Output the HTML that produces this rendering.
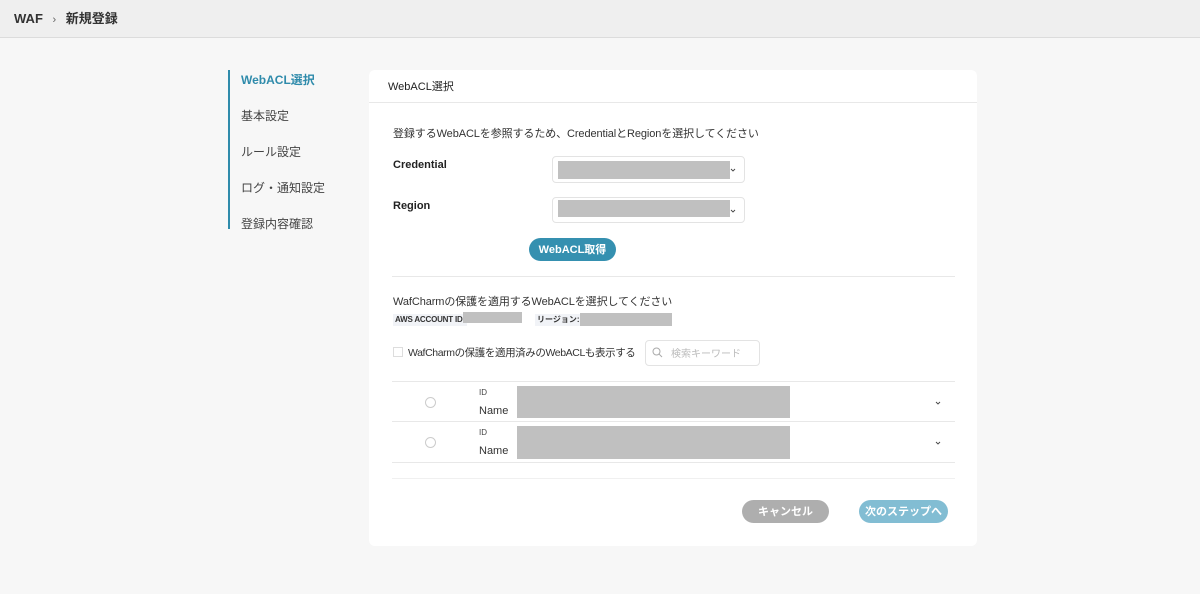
<!DOCTYPE html>
<html><head><meta charset="utf-8"><style>
*{box-sizing:border-box;margin:0;padding:0}
body{width:1200px;height:594px;background:#f7f7f7;font-family:"Liberation Sans","Noto Sans CJK JP",sans-serif;color:#333;position:relative;overflow:hidden;line-height:1.2}
.a{position:absolute;white-space:nowrap}
.hdr{left:0;top:0;width:1200px;height:38px;background:#efefef;border-bottom:1px solid #dcdcdc}
.nav{left:228px;top:70px;width:2px;height:159px;background:#2f8bab}
.nl{left:241px;font-size:12px;color:#444}
.card{left:369px;top:70px;width:608px;height:476px;background:#fff;border-radius:6px}
.gray{background:#c0c0c0}
.sel{border:1px solid #e3e3e3;border-radius:4px;background:#fff}
.btn{border-radius:14px;color:#fff;font-size:11px;font-weight:bold;display:flex;align-items:center;justify-content:center;padding-top:3px}
.hr{height:1px;background:#e8e8e8}
.radio{width:11px;height:11px;border:1px solid #ccc;border-radius:50%}
</style></head><body>
<div class="a hdr"></div>
<div class="a" style="left:14px;top:11px;font-size:13px;font-weight:bold;color:#333">WAF <span style="font-weight:normal;font-size:11px;margin:0 6px;color:#666">›</span> 新規登録</div>
<div class="a nav"></div>
<div class="a nl" style="top:73px;color:#2f8bab;font-weight:bold">WebACL選択</div>
<div class="a nl" style="top:109px">基本設定</div>
<div class="a nl" style="top:145px">ルール設定</div>
<div class="a nl" style="top:181px">ログ・通知設定</div>
<div class="a nl" style="top:217px">登録内容確認</div>
<div class="a card"></div>
<div class="a" style="left:388px;top:81px;font-size:11px;color:#222">WebACL選択</div>
<div class="a hr" style="left:369px;top:102px;width:608px"></div>
<div class="a" style="left:393px;top:128px;font-size:11px;color:#333;letter-spacing:-0.1px">登録するWebACLを参照するため、CredentialとRegionを選択してください</div>
<div class="a" style="left:393px;top:159px;font-size:11px;font-weight:bold;color:#222">Credential</div>
<div class="a" style="left:393px;top:200px;font-size:11px;font-weight:bold;color:#222">Region</div>
<div class="a sel" style="left:552px;top:156px;width:193px;height:27px"></div>
<div class="a gray" style="left:558px;top:161px;width:172px;height:18px"></div>
<svg class="a" style="left:730px;top:168px" width="6" height="4" viewBox="0 0 6 4"><path d="M1 1l2 2 2-2" stroke="#444" fill="none" stroke-width="0.9"/></svg>
<div class="a sel" style="left:552px;top:197px;width:193px;height:26px"></div>
<div class="a gray" style="left:558px;top:200px;width:172px;height:17px"></div>
<svg class="a" style="left:730px;top:209px" width="6" height="4" viewBox="0 0 6 4"><path d="M1 1l2 2 2-2" stroke="#444" fill="none" stroke-width="0.9"/></svg>
<div class="a btn" style="left:529px;top:238px;width:87px;height:23px;background:#3590b0">WebACL取得</div>
<div class="a hr" style="left:392px;top:276px;width:563px"></div>
<div class="a" style="left:393px;top:296px;font-size:11px;color:#333;letter-spacing:-0.1px">WafCharmの保護を適用するWebACLを選択してください</div>
<div class="a" style="left:393px;top:314px;font-size:8px;font-weight:bold;background:#f1f3f7;padding:1px 2px;color:#333;letter-spacing:-0.2px">AWS ACCOUNT ID:</div>
<div class="a gray" style="left:463px;top:312px;width:59px;height:11px"></div>
<div class="a" style="left:535px;top:314px;font-size:8px;font-weight:bold;background:#f1f3f7;padding:1px 2px;color:#333">リージョン:</div>
<div class="a gray" style="left:580px;top:313px;width:92px;height:13px"></div>
<div class="a" style="left:393px;top:347px;width:10px;height:10px;border:1px solid #ddd"></div>
<div class="a" style="left:408px;top:347px;font-size:10.5px;color:#333;letter-spacing:-0.4px">WafCharmの保護を適用済みのWebACLも表示する</div>
<div class="a sel" style="left:645px;top:340px;width:115px;height:26px"></div>
<svg class="a" style="left:652px;top:347px" width="11" height="11" viewBox="0 0 11 11"><circle cx="4.5" cy="4.5" r="3.5" stroke="#aaa" fill="none"/><path d="M7 7l3 3" stroke="#aaa"/></svg>
<div class="a" style="left:671px;top:349px;font-size:10px;color:#bbb">検索キーワード</div>
<div class="a hr" style="left:392px;top:381px;width:563px"></div>
<div class="a radio" style="left:425px;top:397px"></div>
<div class="a" style="left:479px;top:388px;font-size:8px;color:#444">ID</div>
<div class="a" style="left:479px;top:405px;font-size:11px;color:#333">Name</div>
<div class="a gray" style="left:517px;top:386px;width:273px;height:32px"></div>
<svg class="a" style="left:935px;top:401px" width="6" height="4" viewBox="0 0 6 4"><path d="M1 1l2 2 2-2" stroke="#444" fill="none" stroke-width="0.9"/></svg>
<div class="a hr" style="left:392px;top:421px;width:563px"></div>
<div class="a radio" style="left:425px;top:437px"></div>
<div class="a" style="left:479px;top:428px;font-size:8px;color:#444">ID</div>
<div class="a" style="left:479px;top:445px;font-size:11px;color:#333">Name</div>
<div class="a gray" style="left:517px;top:426px;width:273px;height:33px"></div>
<svg class="a" style="left:935px;top:441px" width="6" height="4" viewBox="0 0 6 4"><path d="M1 1l2 2 2-2" stroke="#444" fill="none" stroke-width="0.9"/></svg>
<div class="a hr" style="left:392px;top:462px;width:563px"></div>
<div class="a hr" style="left:392px;top:478px;width:563px;background:#f0f0f0"></div>
<div class="a btn" style="left:742px;top:500px;width:87px;height:23px;background:#aeaeae">キャンセル</div>
<div class="a btn" style="left:859px;top:500px;width:89px;height:23px;background:#82bdd3">次のステップへ</div>
</body></html>
